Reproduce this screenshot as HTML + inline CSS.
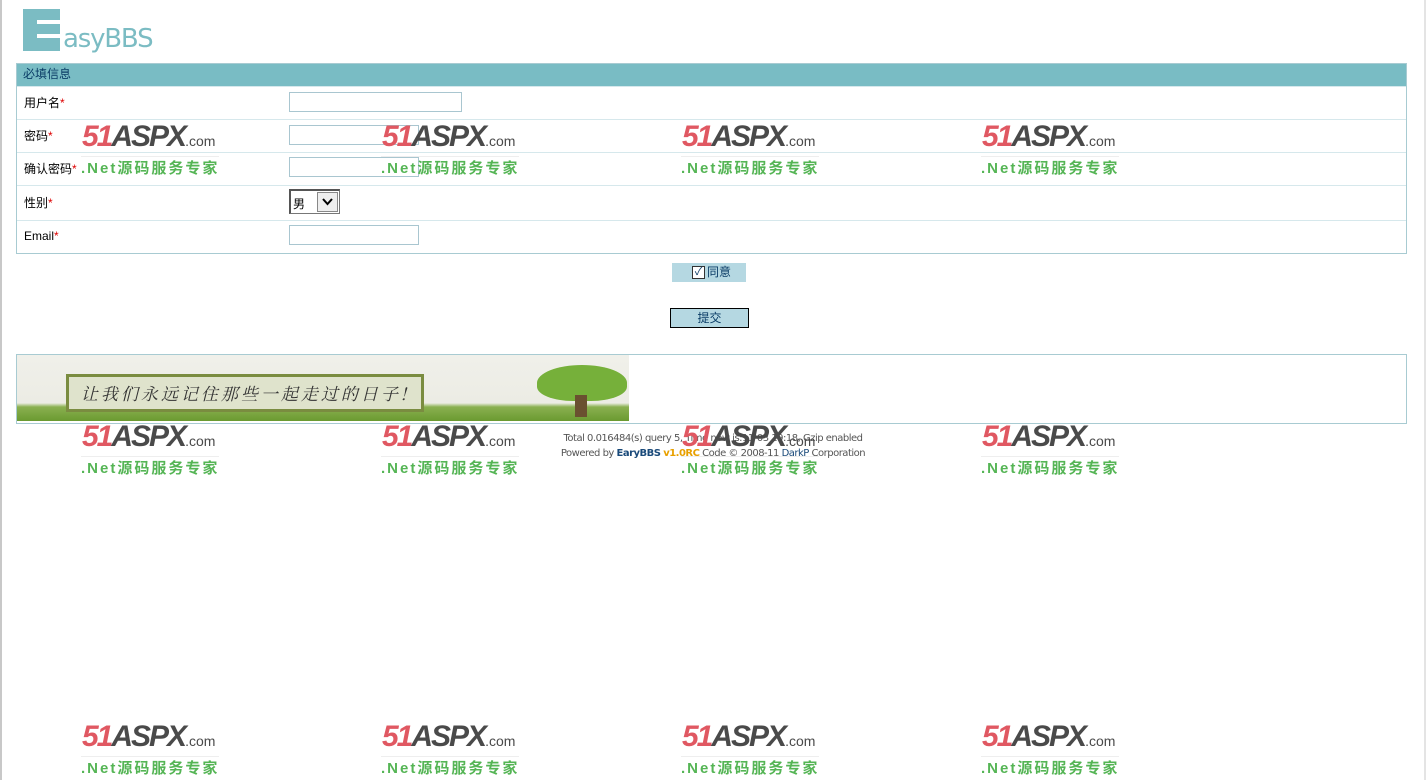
<!DOCTYPE html>
<html><head><meta charset="utf-8"><style>
body{margin:0;width:1426px;height:780px;background:#fff;position:relative;overflow:hidden;font-family:"Liberation Sans","Noto Sans CJK SC",sans-serif;font-size:12px;color:#000}
.lb{position:absolute;left:0;top:0;width:2px;height:780px;background:#c8c8c8}
.rb{position:absolute;right:0;top:0;width:2px;height:780px;background:#e4e4e4}
.logo{position:absolute;left:23px;top:9px}
.logo .E{position:absolute;left:0;top:0;width:37px;height:42px;background:#7bbcc3}
.logo .E i{position:absolute;left:14px;background:#fff;height:4px;width:23px}
.logo .t{position:absolute;left:40px;top:15px;font-size:26px;color:#7bbcc3;font-family:"DejaVu Sans",sans-serif;letter-spacing:-1.2px;white-space:nowrap}
.tbl{position:absolute;left:16px;top:63px;width:1389px;height:189px;border:1px solid #a8cbd2}
.hd{height:22px;background:#79bcc4;color:#0a3c66;line-height:20px;padding-left:6px}
.row{position:absolute;left:0;width:1389px;border-top:1px solid #d6e8ec}
.row span{position:absolute;left:7px;font-size:12px}
.row b{color:#d00;font-weight:normal}
.in{position:absolute;left:272px;height:18px;border:1px solid #a9c6d0;background:#fff}
.sel{position:absolute;left:272px;width:48px;height:22px;border:1px solid #777;border-left:2px solid #555;border-top:2px solid #555;background:#fff}
.sel .a{position:absolute;right:1px;top:1px;width:19px;height:18px;background:#eee;border:1px solid #888}
.agree{position:absolute;left:672px;top:263px;width:74px;height:19px;background:#b5d8e2;color:#0a3c66;line-height:19px}
.cb{position:absolute;left:20px;top:3px;width:11px;height:11px;border:1px solid #333;background:#fff;font-size:11px;line-height:11px;text-align:center}
.btn{position:absolute;left:670px;top:308px;width:77px;height:18px;border:1px solid #000;background:#b5d8e2;color:#0a3c66;text-align:center;line-height:18px}
.bn{position:absolute;left:16px;top:354px;width:1389px;height:68px;border:1px solid #a8cbd2}
.img{position:absolute;left:0;top:0;width:612px;height:66px;background:linear-gradient(#f0f0ea 0,#ecece4 48px,#8ab050 52px,#6a9a30 66px)}
.sign{position:absolute;left:49px;top:19px;width:352px;height:32px;background:#dfe3cc;border:3px solid #7a8c40;font-size:17px;line-height:32px;color:#333;text-align:center;font-style:italic;font-family:"Noto Serif CJK SC",serif;letter-spacing:3px}
.tree{position:absolute;left:520px;top:10px;width:90px;height:36px;border-radius:50% 50% 40% 40%;background:#76b03a}
.trunk{position:absolute;left:558px;top:40px;width:12px;height:22px;background:#6a5030}
.foot{position:absolute;left:0;width:1426px;text-align:center;font-size:10px;color:#555;font-family:"DejaVu Sans",sans-serif;letter-spacing:-0.5px}
.wm{position:absolute;width:140px;height:56px}
.wm .n{position:absolute;left:2px;top:-4px;font:italic bold 30px "Liberation Sans",sans-serif;color:#e05862;letter-spacing:-2px}
.wm .n em{color:#4a4a4a;font-style:italic}
.wm .n small{font-size:14px;color:#4a4a4a;font-style:normal;font-weight:normal;letter-spacing:0}
.wm .g{position:absolute;left:1px;top:32px;font:bold 15px "Liberation Sans","Noto Sans CJK SC",sans-serif;color:#55b555;letter-spacing:2px;white-space:nowrap;border-top:1px solid #eee}
</style></head><body>
<div class="lb"></div><div class="rb"></div>
<div class="logo"><div class="E"><i style="top:11px"></i><i style="top:25px"></i></div><div class="t">asyBBS</div></div>
<div class="tbl">
<div class="hd">必填信息</div>
<div class="row" style="top:22px;height:33px"><span style="top:7px">用户名<b>*</b></span><div class="in" style="top:5px;width:171px"></div></div>
<div class="row" style="top:55px;height:33px"><span style="top:7px">密码<b>*</b></span><div class="in" style="top:5px;width:128px"></div></div>
<div class="row" style="top:88px;height:33px"><span style="top:7px">确认密码<b>*</b></span><div class="in" style="top:4px;width:128px"></div></div>
<div class="row" style="top:121px;height:35px"><span style="top:8px">性别<b>*</b></span><div class="sel" style="top:3px"><span style="left:2px;top:4px;position:absolute">男</span><div class="a"><svg width="19" height="18"><path d="M5 6l4.5 5 4.5-5" stroke="#000" stroke-width="2" fill="none"/></svg></div></div></div>
<div class="row" style="top:156px;height:33px"><span style="top:8px">Email<b>*</b></span><div class="in" style="top:4px;width:128px"></div></div>
</div>
<div class="agree"><div class="cb">✓</div><span style="position:absolute;left:35px">同意</span></div>
<div class="btn">提交</div>
<div class="bn"><div class="img"><div class="sign">让我们永远记住那些一起走过的日子!</div><div class="tree"></div><div class="trunk"></div></div></div>
<div class="foot" style="top:433px">Total 0.016484(s) query 5, Time now is:11-03 19:18, Gzip enabled</div>
<div class="foot" style="top:448px">Powered by <b style="color:#1a4a7a">EaryBBS</b> <b style="color:#e8a000">v1.0RC</b> Code © 2008-11 <span style="color:#1a4a7a">DarkP</span> Corporation</div>
<div class="wm" style="left:80px;top:124px"><div class="n">51<em>ASPX</em><small>.com</small></div><div class="g">.Net源码服务专家</div></div>
<div class="wm" style="left:380px;top:124px"><div class="n">51<em>ASPX</em><small>.com</small></div><div class="g">.Net源码服务专家</div></div>
<div class="wm" style="left:680px;top:124px"><div class="n">51<em>ASPX</em><small>.com</small></div><div class="g">.Net源码服务专家</div></div>
<div class="wm" style="left:980px;top:124px"><div class="n">51<em>ASPX</em><small>.com</small></div><div class="g">.Net源码服务专家</div></div>
<div class="wm" style="left:80px;top:424px"><div class="n">51<em>ASPX</em><small>.com</small></div><div class="g">.Net源码服务专家</div></div>
<div class="wm" style="left:380px;top:424px"><div class="n">51<em>ASPX</em><small>.com</small></div><div class="g">.Net源码服务专家</div></div>
<div class="wm" style="left:680px;top:424px"><div class="n">51<em>ASPX</em><small>.com</small></div><div class="g">.Net源码服务专家</div></div>
<div class="wm" style="left:980px;top:424px"><div class="n">51<em>ASPX</em><small>.com</small></div><div class="g">.Net源码服务专家</div></div>
<div class="wm" style="left:80px;top:724px"><div class="n">51<em>ASPX</em><small>.com</small></div><div class="g">.Net源码服务专家</div></div>
<div class="wm" style="left:380px;top:724px"><div class="n">51<em>ASPX</em><small>.com</small></div><div class="g">.Net源码服务专家</div></div>
<div class="wm" style="left:680px;top:724px"><div class="n">51<em>ASPX</em><small>.com</small></div><div class="g">.Net源码服务专家</div></div>
<div class="wm" style="left:980px;top:724px"><div class="n">51<em>ASPX</em><small>.com</small></div><div class="g">.Net源码服务专家</div></div>
</body></html>
